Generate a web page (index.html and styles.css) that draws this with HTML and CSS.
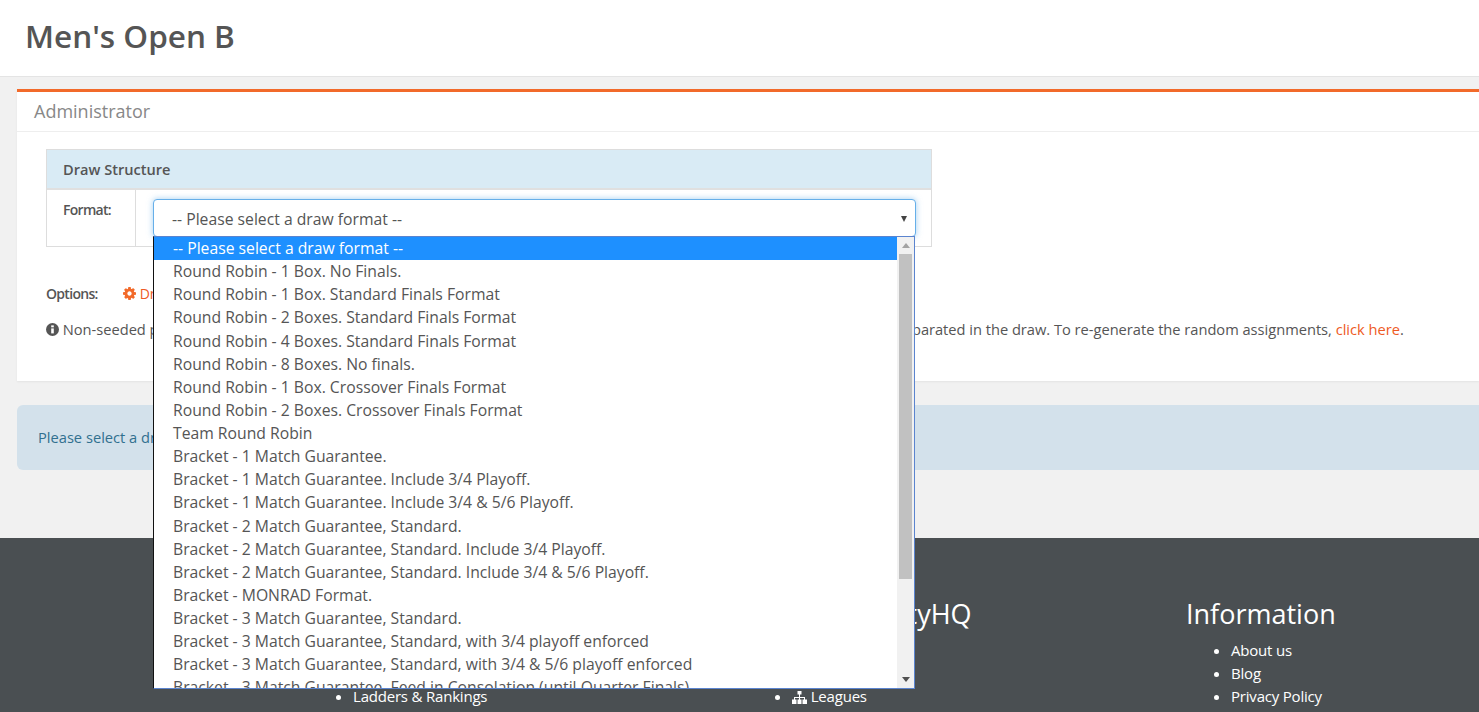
FILE: index.html
```html
<!DOCTYPE html>
<html lang="en">
<head>
<meta charset="utf-8">
<title>Men's Open B</title>
<link rel="stylesheet" href="styles.css">
</head>
<body>
<header class="page-head"><h1>Men's Open B</h1></header>
<main class="content">
  <section class="panel">
    <h2 class="panel-title">Administrator</h2>
    <div class="panel-body">
      <div class="draw-box">
        <div class="draw-head">Draw Structure</div>
        <div class="draw-row">
          <div class="draw-label">Format:</div>
          <div class="draw-field">
            <div class="select">-- Please select a draw format --<span class="select-arrow"></span></div>
            <div class="dropdown">
              <ul class="options">
                <li class="selected">-- Please select a draw format --</li>
                <li>Round Robin - 1 Box. No Finals.</li>
                <li>Round Robin - 1 Box. Standard Finals Format</li>
                <li>Round Robin - 2 Boxes. Standard Finals Format</li>
                <li>Round Robin - 4 Boxes. Standard Finals Format</li>
                <li>Round Robin - 8 Boxes. No finals.</li>
                <li>Round Robin - 1 Box. Crossover Finals Format</li>
                <li>Round Robin - 2 Boxes. Crossover Finals Format</li>
                <li>Team Round Robin</li>
                <li>Bracket - 1 Match Guarantee.</li>
                <li>Bracket - 1 Match Guarantee. Include 3/4 Playoff.</li>
                <li>Bracket - 1 Match Guarantee. Include 3/4 &amp; 5/6 Playoff.</li>
                <li>Bracket - 2 Match Guarantee, Standard.</li>
                <li>Bracket - 2 Match Guarantee, Standard. Include 3/4 Playoff.</li>
                <li>Bracket - 2 Match Guarantee, Standard. Include 3/4 &amp; 5/6 Playoff.</li>
                <li>Bracket - MONRAD Format.</li>
                <li>Bracket - 3 Match Guarantee, Standard.</li>
                <li>Bracket - 3 Match Guarantee, Standard, with 3/4 playoff enforced</li>
                <li>Bracket - 3 Match Guarantee, Standard, with 3/4 &amp; 5/6 playoff enforced</li>
                <li>Bracket - 3 Match Guarantee, Feed in Consolation (until Quarter Finals)</li>
              </ul>
              <div class="scrollbar">
                <span class="arrow-up"></span>
                <span class="thumb"></span>
                <span class="arrow-down"></span>
              </div>
            </div>
          </div>
        </div>
      </div>
      <div class="options-row">
        <span class="options-label">Options:</span>
        <a class="link" href="#"><svg class="icon-cog" viewBox="0 0 1536 1536"><path fill-rule="evenodd" d="M1024 768q0-106-75-181t-181-75-181 75-75 181 75 181 181 75 181-75 75-181zm512-109v222q0 12-8 23t-20 13l-185 28q-19 54-39 91 35 50 107 138 10 12 10 25t-9 23q-27 37-99 108t-94 71q-12 0-26-9l-138-108q-44 23-91 38-16 136-29 186-7 28-36 28h-222q-14 0-24.5-8.5t-11.5-21.5l-28-184q-49-16-90-37l-141 107q-10 9-25 9-14 0-25-11-126-114-165-168-7-10-7-23 0-12 8-23 15-21 51-66.5t54-70.5q-27-50-41-99l-183-27q-13-2-21-12.5t-8-23.5v-222q0-12 8-23t19-13l186-28q14-46 39-92-40-57-107-138-10-12-10-24 0-10 9-23 26-36 98.5-107.5t94.5-71.5q13 0 26 10l138 107q44-23 91-38 16-136 29-186 7-28 36-28h222q14 0 24.5 8.5t11.5 21.5l28 184q49 16 90 37l142-107q9-9 24-9 13 0 25 10 129 119 165 170 7 8 7 22 0 12-8 23-15 21-51 66.5t-54 70.5q26 50 41 98l183 28q13 2 21 12.5t8 23.5z"/></svg> Draw settings</a>
      </div>
      <p class="note"><svg class="icon-info" viewBox="0 0 12 12"><circle class="info-disc" cx="6" cy="6" r="6"/><rect class="info-mark" x="4.8" y="5" width="2.4" height="4.6"/><rect class="info-mark" x="4.8" y="2.2" width="2.4" height="1.8"/></svg> Non-seeded players are randomly assigned a position in the draw, using a method which keeps all the seeded players well separated in the draw. To re-generate the random assignments, <a class="link" href="#">click here</a>.</p>
    </div>
  </section>
  <div class="alert">Please select a draw format to preview the draw.</div>
</main>
<footer class="footer">
  <div class="foot-col">
    <h3>Features</h3>
    <ul>
      <li>Tournaments</li>
      <li>Draws &amp; Results</li>
      <li>Ladders &amp; Rankings</li>
    </ul>
  </div>
  <div class="foot-col">
    <h3>Explore SportyHQ</h3>
    <ul>
      <li>Clubs</li>
      <li>Events</li>
      <li><svg class="icon-sitemap" viewBox="0 0 15 13"><path d="M5.5 0h4v3.5H8V6h5v2.500h2V13H10.500V8.500H12V7H8v1.500h1.500V13h-4V8.500H7V7H3v1.500h1.500V13H0V8.500h2V6h5V3.500H5.500z"/></svg> Leagues</li>
    </ul>
  </div>
  <div class="foot-col">
    <h3>Information</h3>
    <ul>
      <li>About us</li>
      <li>Blog</li>
      <li>Privacy Policy</li>
    </ul>
  </div>
</footer>
</body>
</html>
```
FILE: styles.css
```css
* { box-sizing: border-box; }
html, body { height: 712px; overflow: hidden; }
body {
  margin: 0;
  background: #f1f1f1;
  font-family: "Open Sans", sans-serif;
  font-size: 14px;
  color: #555;
}
.page-head {
  height: 77px;
  background: #fff;
  border-bottom: 1px solid #e4e4e4;
  padding: 12px 25px 0;
}
.page-head h1 {
  margin: 0;
  font-size: 31.5px;
  line-height: 47px;
  font-weight: 600;
  color: #555;
}
.content { padding: 12px 0 0 17px; height: 461px; }
.panel {
  background: #fff;
  border-top: 3px solid #f26a2a;
  height: 292px;
  box-shadow: 0 1px 2px rgba(0, 0, 0, .06);
}
.panel-title {
  margin: 0;
  height: 40px;
  padding: 0 17px;
  border-bottom: 1px solid #eee;
  font-size: 18px;
  line-height: 39px;
  font-weight: 400;
  color: #888;
}
.panel-body { padding: 17px 29px; }
.draw-box {
  width: 886px;
  height: 98px;
  border: 1px solid #ddd;
}
.draw-head {
  height: 40px;
  padding-left: 16px;
  background: #d9ebf5;
  border-bottom: 2px solid #e0e0e0;
  font-weight: 600;
  line-height: 38px;
  font-size: 14.6px;
}
.draw-row { display: flex; height: 56px; }
.draw-label {
  width: 89px;
  border-right: 1px solid #ddd;
  padding: 10px 0 0 16px;
  font-weight: 600;
  letter-spacing: -.7px;
}
.draw-field { position: relative; flex: 1; padding: 9px 15px 0 17px; }
.select {
  position: relative;
  height: 38px;
  border: 1px solid #66afe9;
  border-radius: 4px;
  box-shadow: 0 0 6px rgba(102, 175, 233, .6);
  background: #fff;
  padding-left: 18px;
  font-size: 15.73px;
  line-height: 38px;
}
.select-arrow {
  position: absolute;
  right: 8px;
  top: 16px;
  border-style: solid;
  border-width: 6px 3.5px 0;
  border-color: #444 transparent transparent;
}
.dropdown {
  position: absolute;
  left: 17px;
  top: 46px;
  width: 762px;
  height: 453px;
  display: flex;
  background: #fff;
  border: 1px solid #5b84cf;
  border-left-color: #111;
  overflow: hidden;
  z-index: 5;
}
.options {
  flex: 1;
  min-width: 0;
  margin: 0;
  padding: 0;
  list-style: none;
  font-size: 15.73px;
  line-height: 23.125px;
}
.options li { padding-left: 19px; white-space: nowrap; }
.options .selected { background: #1e90ff; color: #fff; }
.scrollbar {
  width: 17px;
  background: #f1f1f1;
  display: flex;
  flex-direction: column;
  align-items: center;
  padding: 0 2px;
}
.arrow-up, .arrow-down {
  flex: none;
  border-style: solid;
  border-color: transparent;
}
.arrow-up {
  margin-top: 6px;
  border-width: 0 4px 5px;
  border-bottom-color: #a3a3a3;
}
.thumb {
  flex: none;
  width: 100%;
  height: 325px;
  margin: 6px 0 auto;
  background: #c1c1c1;
}
.arrow-down {
  margin-bottom: 6px;
  border-width: 5px 4px 0;
  border-top-color: #505050;
}
.options-row {
  margin-top: 37px;
  display: flex;
  line-height: 19px;
}
.options-label {
  width: 77px;
  font-weight: 600;
  letter-spacing: -.7px;
}
.link { color: #ee5a24; text-decoration: none; }
.icon-cog { width: 13px; height: 13px; fill: #f26a2a; vertical-align: -1px; }
.note {
  margin: 17px 0 0;
  font-size: 14.67px;
  line-height: 19px;
  letter-spacing: -.016px;
  white-space: nowrap;
}
.icon-info { width: 13px; height: 13px; vertical-align: -1px; }
.info-disc { fill: #555; }
.info-mark { fill: #fff; }
.alert {
  margin-top: 24px;
  height: 65px;
  padding-left: 21px;
  background: #d3e1eb;
  border-radius: 6px 0 0 6px;
  color: #31708f;
  font-size: 14.67px;
  line-height: 65px;
}
.footer {
  height: 174px;
  background: #4a4f52;
  color: #fff;
  display: grid;
  grid-template-columns: repeat(3, 439px);
  padding: 56px 0 0 308px;
}
.foot-col h3 {
  margin: 0;
  font-size: 27px;
  line-height: 40px;
  font-weight: 400;
}
.foot-col ul {
  margin: 5px 0 0;
  padding-left: 45px;
  font-size: 15px;
  line-height: 23px;
  letter-spacing: -.2px;
}
.icon-sitemap { width: 15px; height: 13px; fill: #fff; vertical-align: -2px; }
```
